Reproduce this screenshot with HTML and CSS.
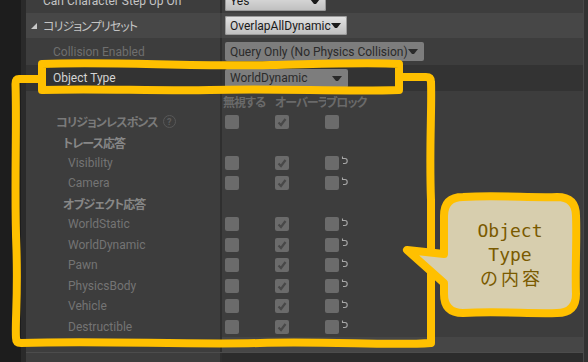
FILE: index.html
```html
<!DOCTYPE html>
<html lang="ja">
<head>
    <meta charset="UTF-8">
    <title>Collision Presets</title>
    <link rel="stylesheet" href="styles.css">
</head>
<body>
<div id="app">
    <div class="gutter"></div>
    <div class="panel">
        <div class="row cut">
            <div class="name pad1">Can Character Step Up On</div>
            <div class="value"><span class="combo light w100">Yes<i class="arrow"></i></span></div>
        </div>
        <div class="row cat">
            <div class="name pad0 jp">
                <svg class="tri" width="6" height="6" viewBox="0 0 6 6"><polygon points="6,0 6,6 0,6" fill="#c8c8c8"/></svg>
                コリジョンプリセット
            </div>
            <div class="value"><span class="combo light">OverlapAllDynamic<i class="arrow"></i></span></div>
        </div>
        <div class="row tall">
            <div class="name pad2 dim">Collision Enabled</div>
            <div class="value"><span class="combo grey">Query Only (No Physics Collision)<i class="arrow"></i></span></div>
        </div>
        <div class="row sel">
            <div class="name pad2 bright">Object Type</div>
            <div class="value"><span class="combo grey w123">WorldDynamic<i class="arrow"></i></span></div>
        </div>
        <div class="row thin">
            <div class="name"></div>
            <div class="value heads jp">
                <span class="head">無視する</span>
                <span class="head">オーバーラップ</span>
                <span class="head">ブロック</span>
            </div>
        </div>
        <div class="row thin">
            <div class="name pad3 group jp">コリジョンレスポンス <span class="help">?</span></div>
            <div class="value boxes">
                <span class="box"></span>
                <span class="box on"><svg width="14" height="14" viewBox="0 0 14 14"><polyline points="3.5,7.5 6,10 10.5,4" /></svg></span>
                <span class="box"></span>
            </div>
        </div>
        <div class="row thin">
            <div class="name pad4 sub jp">トレース応答</div>
            <div class="value"></div>
        </div>
        <div class="row thin">
            <div class="name pad5 chan">Visibility</div>
            <div class="value boxes">
                <span class="box"></span>
                <span class="box on"><svg width="14" height="14" viewBox="0 0 14 14"><polyline points="3.5,7.5 6,10 10.5,4" /></svg></span>
                <span class="box"></span>
                <svg class="reset" width="7" height="9" viewBox="0 0 7 9"><path d="M1.5,0.5 V2.5 H4 Q6.2,2.5 6.2,5 Q6.2,7.5 3.8,7.5 H2" /></svg>
            </div>
        </div>
        <div class="row thin">
            <div class="name pad5 chan">Camera</div>
            <div class="value boxes">
                <span class="box"></span>
                <span class="box on"><svg width="14" height="14" viewBox="0 0 14 14"><polyline points="3.5,7.5 6,10 10.5,4" /></svg></span>
                <span class="box"></span>
                <svg class="reset" width="7" height="9" viewBox="0 0 7 9"><path d="M1.5,0.5 V2.5 H4 Q6.2,2.5 6.2,5 Q6.2,7.5 3.8,7.5 H2" /></svg>
            </div>
        </div>
        <div class="row thin">
            <div class="name pad4 sub jp">オブジェクト応答</div>
            <div class="value"></div>
        </div>
        <div class="row thin">
            <div class="name pad5 chan">WorldStatic</div>
            <div class="value boxes">
                <span class="box"></span>
                <span class="box on"><svg width="14" height="14" viewBox="0 0 14 14"><polyline points="3.5,7.5 6,10 10.5,4" /></svg></span>
                <span class="box"></span>
                <svg class="reset" width="7" height="9" viewBox="0 0 7 9"><path d="M1.5,0.5 V2.5 H4 Q6.2,2.5 6.2,5 Q6.2,7.5 3.8,7.5 H2" /></svg>
            </div>
        </div>
        <div class="row thin">
            <div class="name pad5 chan">WorldDynamic</div>
            <div class="value boxes">
                <span class="box"></span>
                <span class="box on"><svg width="14" height="14" viewBox="0 0 14 14"><polyline points="3.5,7.5 6,10 10.5,4" /></svg></span>
                <span class="box"></span>
                <svg class="reset" width="7" height="9" viewBox="0 0 7 9"><path d="M1.5,0.5 V2.5 H4 Q6.2,2.5 6.2,5 Q6.2,7.5 3.8,7.5 H2" /></svg>
            </div>
        </div>
        <div class="row thin">
            <div class="name pad5 chan">Pawn</div>
            <div class="value boxes">
                <span class="box"></span>
                <span class="box on"><svg width="14" height="14" viewBox="0 0 14 14"><polyline points="3.5,7.5 6,10 10.5,4" /></svg></span>
                <span class="box"></span>
                <svg class="reset" width="7" height="9" viewBox="0 0 7 9"><path d="M1.5,0.5 V2.5 H4 Q6.2,2.5 6.2,5 Q6.2,7.5 3.8,7.5 H2" /></svg>
            </div>
        </div>
        <div class="row thin">
            <div class="name pad5 chan">PhysicsBody</div>
            <div class="value boxes">
                <span class="box"></span>
                <span class="box on"><svg width="14" height="14" viewBox="0 0 14 14"><polyline points="3.5,7.5 6,10 10.5,4" /></svg></span>
                <span class="box"></span>
                <svg class="reset" width="7" height="9" viewBox="0 0 7 9"><path d="M1.5,0.5 V2.5 H4 Q6.2,2.5 6.2,5 Q6.2,7.5 3.8,7.5 H2" /></svg>
            </div>
        </div>
        <div class="row thin">
            <div class="name pad5 chan">Vehicle</div>
            <div class="value boxes">
                <span class="box"></span>
                <span class="box on"><svg width="14" height="14" viewBox="0 0 14 14"><polyline points="3.5,7.5 6,10 10.5,4" /></svg></span>
                <span class="box"></span>
                <svg class="reset" width="7" height="9" viewBox="0 0 7 9"><path d="M1.5,0.5 V2.5 H4 Q6.2,2.5 6.2,5 Q6.2,7.5 3.8,7.5 H2" /></svg>
            </div>
        </div>
        <div class="row thin">
            <div class="name pad5 chan">Destructible</div>
            <div class="value boxes">
                <span class="box"></span>
                <span class="box on"><svg width="14" height="14" viewBox="0 0 14 14"><polyline points="3.5,7.5 6,10 10.5,4" /></svg></span>
                <span class="box"></span>
                <svg class="reset" width="7" height="9" viewBox="0 0 7 9"><path d="M1.5,0.5 V2.5 H4 Q6.2,2.5 6.2,5 Q6.2,7.5 3.8,7.5 H2" /></svg>
            </div>
        </div>
        <div class="row gap">
            <div class="name"></div>
            <div class="value band"></div>
        </div>
        <div class="row next">
            <div class="name pad1">Use CCD</div>
            <div class="value"></div>
        </div>
    </div>
    <div class="edge"></div>

    <!-- 注釈 -->
    <svg class="marks" width="588" height="362" viewBox="0 0 588 362">
        <path class="pen" d="M42,64 C110,61 190,67 270,65 C320,64 370,62 399,64 L399,90 C340,92 280,88 210,90 C150,91 90,88 42,90 Z" />
        <path class="pen" d="M42,79 L19,79 Q15.5,79 15.5,84 C17,130 14,190 16.5,250 C18,300 15,320 16,338 Q16,343 21,343 C100,340 180,345 260,343 C330,341 390,346 431,343 L431,200 C429,150 432,110 431,82 Q431,77 426,77 L399,77" />
        <path class="bubble" d="M463,197 C500,195 530,198 557,197 Q576,197 576,216 C577,240 575,270 576,294 Q576,313 557,313 C530,314 500,311 463,313 Q444,313 444,294 L444,283 L407,250 L444,254 L444,216 Q444,197 463,197 Z" />
    </svg>
    <div class="note">
        <div class="note-text">Object<br>Type<br><span class="jp-note">の内容</span></div>
    </div>
</div>
</body>
</html>
```

FILE: styles.css
```css
body {
    margin: 0;
    background: #1e1e1e;
    font-family: Roboto, "Noto Sans CJK JP", sans-serif;
    font-size: 12px;
}
#app {
    position: relative;
    display: flex;
    width: 588px;
    height: 362px;
    overflow: hidden;
}
.gutter {
    flex: none;
    width: 21px;
    background: #1d1d1d;
    border-right: 5px solid #2a2a2a;
}
.panel {
    flex: 1;
    margin-top: -11px;
    background: #3d3d3d;
    font-feature-settings: "palt";
}
.edge {
    flex: none;
    width: 4px;
    background: #323232;
    border-left: 1px solid #484848;
}
.row {
    display: flex;
    height: 26px;
}
.row.cut { height: 24px; }
.row.cat { height: 25px; background: #474747; }
.row.tall { height: 27px; }
.row.sel { background: #333; }
.row.thin { height: 20.5px; }
.row.gap { height: 15px; }
.row.next { height: 30px; border-top: 1px solid #4c4c4c; }
.row.next .value { background: #2c2c2c; }
.name {
    flex: none;
    box-sizing: border-box;
    display: flex;
    align-items: center;
    width: 196px;
    border-right: 2px solid #2f2f2f;
    color: #c4c4c4;
    white-space: nowrap;
}
.jp { letter-spacing: -0.9px; }
.row.cat .name { border-right-color: #404040; }
.value {
    flex: 1;
    display: flex;
    align-items: center;
    padding-left: 3px;
}
.band { background: #464646; }
.pad0 { padding-left: 5px; }
.pad1 { padding-left: 17px; }
.pad2 { padding-left: 27px; }
.pad3 { padding-left: 30px; }
.pad4 { padding-left: 37px; }
.pad5 { padding-left: 42px; }
.tri {
    margin-right: 6px;
}
.dim { color: #6f6f6f; }
.bright { color: #d4d4d4; }
.group {
    color: #7a7a7a;
    font-weight: bold;
}
.sub {
    color: #878787;
    font-weight: bold;
}
.chan { color: #747474; }
.help {
    display: inline-flex;
    align-items: center;
    justify-content: center;
    width: 11px;
    height: 11px;
    margin-left: 5px;
    border: 1px solid #585858;
    border-radius: 50%;
    color: #5e5e5e;
    font-size: 9px;
    font-weight: bold;
    letter-spacing: 0;
}

/* コンボボックス */
.combo {
    display: inline-flex;
    align-items: center;
    height: 19px;
    padding: 0 6px 0 5px;
    border-radius: 2px;
    color: #1a1a1a;
    white-space: nowrap;
}
.combo.light {
    background: linear-gradient(#e4e4e4, #bebebe);
    box-shadow: inset 0 0 0 1px #9a9a9a;
}
.combo.grey {
    background: #7d7d7d;
    color: #2a2a2a;
}
.combo.w100 { width: 90px; }
.combo.w123 { width: 112px; }
.arrow {
    margin-left: auto;
    padding-left: 2px;
    width: 0;
    height: 0;
    border-left: 4.5px solid transparent;
    border-right: 4.5px solid transparent;
    border-top: 5px solid #1a1a1a;
}
.combo.grey .arrow { border-top-color: #2a2a2a; }

/* チェックボックス */
.heads {
    padding-left: 1px;
    color: #6a6a6a;
    font-weight: bold;
}
.head {
    flex: none;
    width: 52px;
    overflow: hidden;
    white-space: nowrap;
}
.head + .head { width: 51px; }
.boxes {
    gap: 36px;
}
.box {
    flex: none;
    width: 14px;
    height: 14px;
    border-radius: 2px;
    background: #6b6b6b;
}
.box svg {
    display: block;
    fill: none;
    stroke: #484848;
    stroke-width: 2.2;
}
.reset {
    margin-left: -34px;
    margin-top: -4px;
    fill: none;
    stroke: #a8a8a8;
    stroke-width: 1.1;
}

/* 注釈 */
.marks {
    position: absolute;
    left: 0;
    top: 0;
    pointer-events: none;
}
.pen {
    fill: none;
    stroke: #ffc000;
    stroke-width: 8;
    stroke-linejoin: round;
    stroke-linecap: round;
}
.bubble {
    fill: #d7ceae;
    stroke: #ffc000;
    stroke-width: 8;
    stroke-linejoin: round;
}
.note {
    position: absolute;
    left: 444px;
    top: 197px;
    width: 132px;
    height: 116px;
    display: flex;
    align-items: center;
    justify-content: center;
    text-align: center;
    font-family: "DejaVu Sans Mono", "Noto Sans CJK JP", monospace;
    font-size: 18px;
    line-height: 24px;
    color: #7a5a00;
}
.jp-note {
    letter-spacing: 3px;
    margin-right: -3px;
}
```
